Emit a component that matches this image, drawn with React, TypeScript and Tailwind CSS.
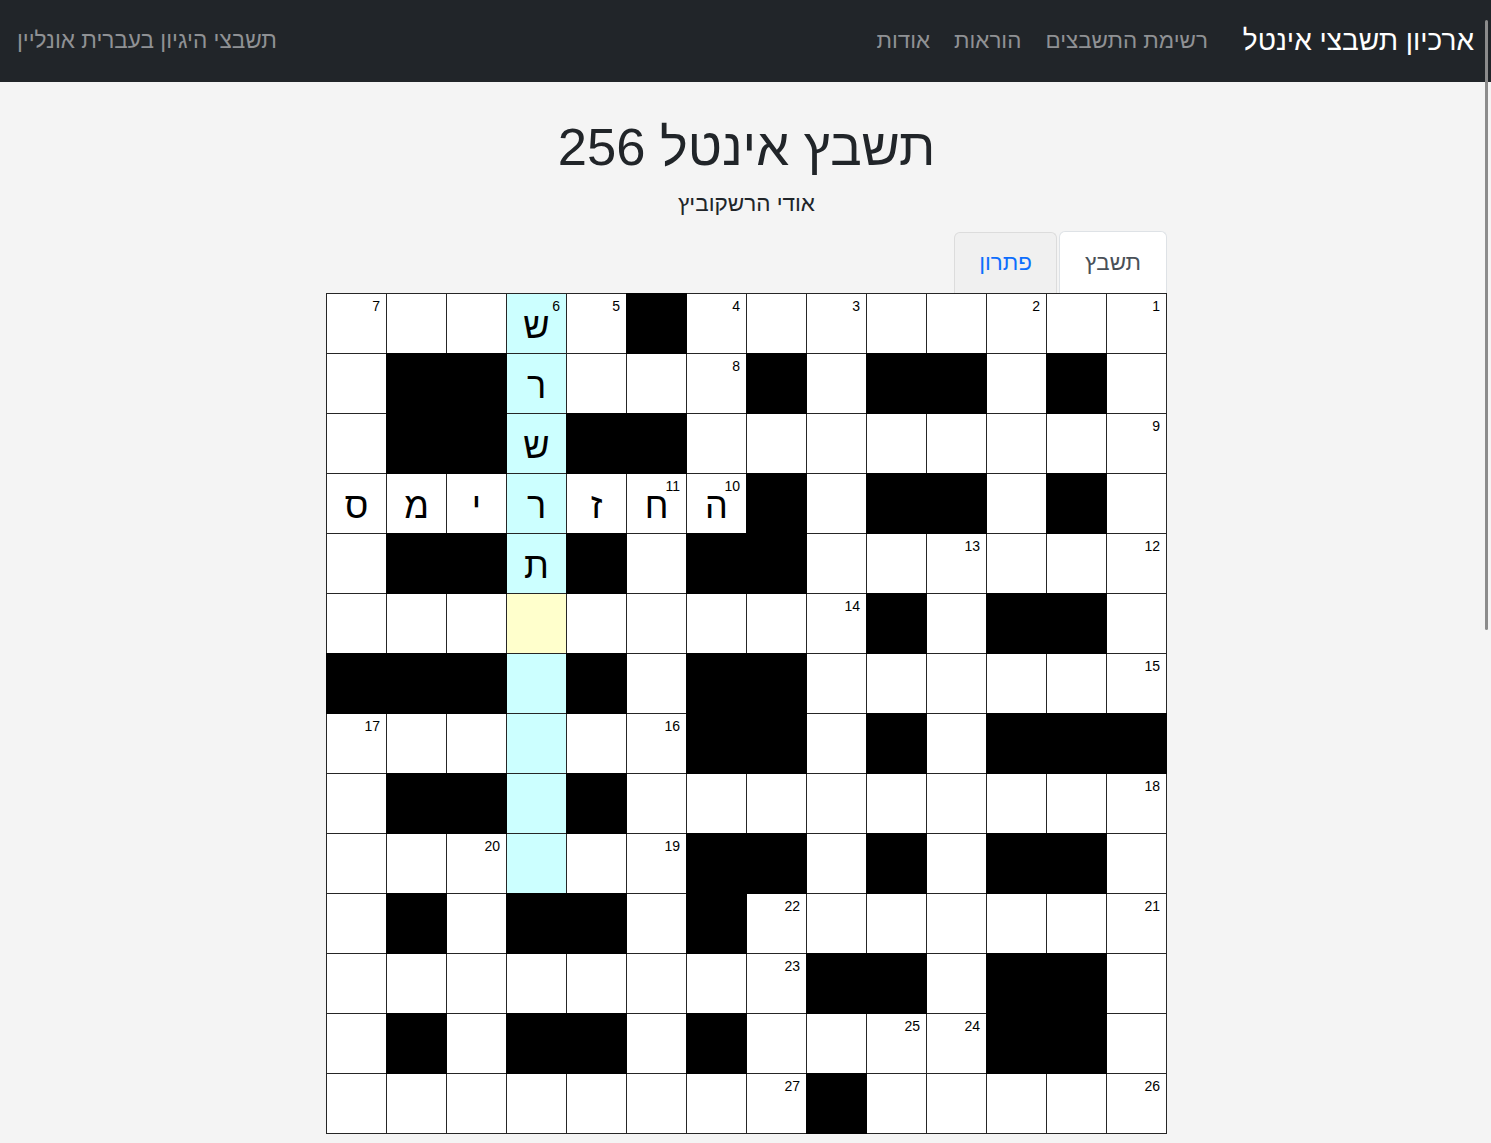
import React from "react"

const rows = [
  "........#.....",
  ".#.##.#....##.",
  "........##.##.",
  ".#.##.#.......",
  "......##.#.##.",
  ".##.#.........",
  "......##.#.###",
  "###.#.##......",
  ".........#.##.",
  ".##.#.##......",
  ".......#.##.#.",
  ".##.##........",
  ".##....#.##.#.",
  ".....#........",
]

// row,col (col counted from the right) -> clue number
const numbers: Record<string, number> = {
  "0,0": 1, "0,2": 2, "0,5": 3, "0,7": 4, "0,9": 5, "0,10": 6, "0,13": 7,
  "1,7": 8, "2,0": 9, "3,7": 10, "3,8": 11, "4,0": 12, "4,3": 13,
  "5,5": 14, "6,0": 15, "7,8": 16, "7,13": 17, "8,0": 18, "9,8": 19,
  "9,11": 20, "10,0": 21, "10,6": 22, "11,6": 23, "12,3": 24, "12,4": 25,
  "13,0": 26, "13,6": 27,
}

const letters: Record<string, string> = {
  "0,10": "ש", "1,10": "ר", "2,10": "ש", "3,7": "ה", "3,8": "ח", "3,9": "ז",
  "3,10": "ר", "3,11": "י", "3,12": "מ", "3,13": "ס", "4,10": "ת",
}

function cellBg(r: number, c: number, black: boolean) {
  if (black) return "bg-black shadow-[0_0_0_1px_#000]"
  if (c === 10 && r === 5) return "bg-[#ffffcc]"
  if (c === 10 && r <= 9) return "bg-[#ccffff]"
  return "bg-white"
}

function Navbar() {
  return (
    <nav className="h-[82px] bg-[#212529] px-[17px] flex items-center justify-between">
      <div className="flex items-center gap-[35px]">
        <a className="text-[28px] text-white leading-none">ארכיון תשבצי אינטל</a>
        <div className="flex items-center gap-[24px] text-[22.4px] text-[#8f9194]">
          <a>רשימת התשבצים</a>
          <a>הוראות</a>
          <a>אודות</a>
        </div>
      </div>
      <span className="text-[22.6px] text-[#8f9194]">תשבצי היגיון בעברית אונליין</span>
    </nav>
  )
}

function Grid() {
  return (
    <div className="grid grid-cols-[repeat(14,59px)] auto-rows-[59px] gap-px bg-[#262626] p-px">
      {rows.map((row, r) =>
        row.split("").map((ch, c) => {
          const black = ch === "#"
          const key = `${r},${c}`
          return (
            <div key={key} className={`relative ${cellBg(r, c, black)}`}>
              {numbers[key] && (
                <span className="absolute top-[5px] right-[6px] text-[14px] leading-[14px] text-black">
                  {numbers[key]}
                </span>
              )}
              {letters[key] && (
                <span className="absolute inset-x-0 top-[20px] text-center text-[36px] leading-[24px] text-black">
                  {letters[key]}
                </span>
              )}
            </div>
          )
        })
      )}
    </div>
  )
}

export default function App() {
  return (
    <div
      dir="rtl"
      className="h-screen overflow-hidden bg-[#f4f4f4] font-['Liberation_Sans','DejaVu_Sans',Arial,sans-serif]"
    >
      <Navbar />
      <main className="flex flex-col items-center pl-[2px]">
        <h1 className="mt-[33px] text-[52.5px] leading-[1.2] text-[#212529] font-normal">תשבץ אינטל 256</h1>
        <p className="mt-[9px] text-[22.5px] leading-[34px] text-[#212529]">אודי הרשקוביץ</p>
        <div className="mt-[10px] w-[841px]">
          <div className="flex gap-[2px] text-[22.4px] leading-[30px]">
            <button className="h-[62px] px-[25px] bg-white border border-b-0 border-[#dee2e6] rounded-t-[6px] text-[#495057]">
              תשבץ
            </button>
            <button className="h-[61px] mt-px px-[24px] bg-[#f0f0f0] border border-b-0 border-[#dcdcdc] rounded-t-[6px] text-[#0d6efd]">
              פתרון
            </button>
          </div>
          <Grid />
        </div>
      </main>
      <div className="fixed right-[3px] top-[20px] w-[3px] h-[610px] rounded-full bg-[#8c8c8c]" />
    </div>
  )
}
